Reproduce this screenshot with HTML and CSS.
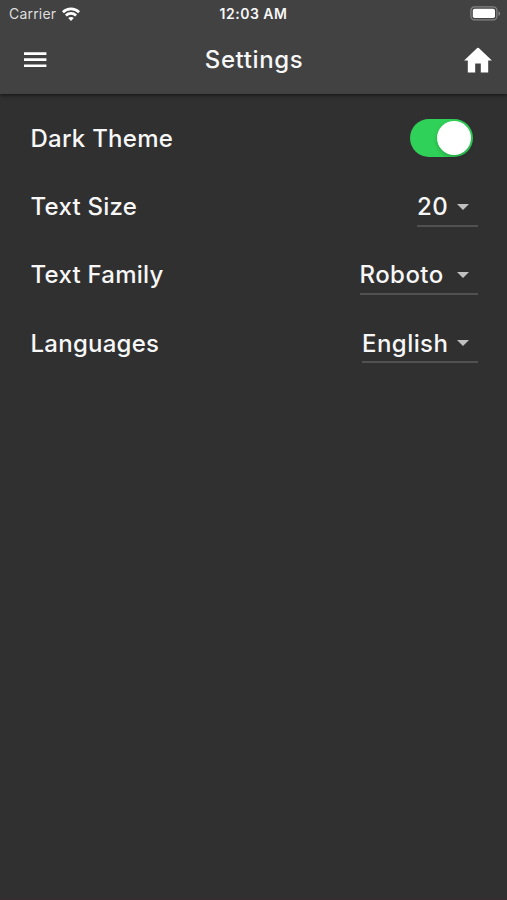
FILE: index.html
```html
<!DOCTYPE html>
<html lang="en">
<head>
<meta charset="utf-8">
<title>Settings</title>
<link rel="stylesheet" href="styles.css">
</head>
<body>
<header class="top">
  <div class="status">
    <div class="carrier"><span>Carrier</span>
      <svg class="wifi" width="18" height="14" viewBox="0 0 18 14" fill="none" stroke="#fff" stroke-width="2.7"><path d="M.9 5.2C5.3.8 12.7.8 17.1 5.2M3.9 8.5c2.9-2.8 7.3-2.8 10.2 0"/><path d="M9 14l-2.8-2.9c1.6-1.4 4-1.4 5.6 0z" fill="#fff" stroke="none"/></svg>
    </div>
    <span class="clock">12:03 AM</span>
    <svg class="battery" width="31" height="15" viewBox="0 0 31 15"><rect x=".9" y=".9" width="26" height="13" rx="3.6" fill="none" stroke="#858585" stroke-width="1.2"/><rect x="2.8" y="2.8" width="22.2" height="9.2" rx="1.8" fill="#fff"/><path d="M28.5 5.2c2.2.8 2.2 3.8 0 4.6z" fill="#858585"/></svg>
  </div>
  <div class="bar">
    <svg class="menu" width="24" height="18" viewBox="0 0 24 18" fill="#fff"><path d="M1 1.2h22.4v2.7H1zM1 7.3h22.4V10H1zM1 13.4h22.4v2.7H1z"/></svg>
    <h1 class="title">Settings</h1>
    <svg class="home" width="28" height="26" viewBox="0 0 28 26" fill="#fff"><path d="M11.2 25.5v-9h5.6v9h7.4v-12h3.7L14.8 1q-.8-.7-1.6 0L.1 13.5h3.7v12z"/></svg>
  </div>
</header>
<main class="list">
  <div class="row"><span class="label">Dark Theme</span><span class="switch"><span class="knob"></span></span></div>
  <div class="row"><span class="label">Text Size</span><span class="select s20"><span>20</span><i class="caret"></i></span></div>
  <div class="row"><span class="label">Text Family</span><span class="select sfont"><span>Roboto</span><i class="caret"></i></span></div>
  <div class="row"><span class="label">Languages</span><span class="select slang"><span>English</span><i class="caret"></i></span></div>
</main>
</body>
</html>
```
FILE: styles.css
```css
* { box-sizing: border-box; }
body {
  margin: 0;
  height: 900px;
  background: #303030;
  color: #f7f7f7;
  font-family: Inter, "Liberation Sans", sans-serif;
  overflow: hidden;
  display: flex;
  flex-direction: column;
}
.top {
  flex: none;
  height: 94px;
  background: #424242;
  box-shadow: 0 1px 4px rgba(0, 0, 0, .65);
}
.status {
  height: 27px;
  padding: 0 6px 0 9px;
  display: grid;
  grid-template-columns: 1fr auto 1fr;
  align-items: center;
}
.carrier {
  display: flex;
  align-items: center;
  gap: 6px;
  font-size: 14px;
  letter-spacing: .2px;
  color: #dedede;
}
.clock { margin-right: 3px; font-size: 14px; font-weight: 600; letter-spacing: .5px; }
.battery { justify-self: end; }
.bar {
  height: 66px;
  padding: 0 15px 0 23px;
  display: grid;
  grid-template-columns: 1fr auto 1fr;
  align-items: center;
}
.title { margin: 0; padding: 0 7px 2px 0; font-size: 24px; font-weight: 500; letter-spacing: .6px; }
.home { justify-self: end; margin-bottom: 1px; }
.list {
  flex: 1;
  padding: 10px 30px 0 30.5px;
  border-bottom: 1px solid #342a30;
}
.row {
  height: 68.4px;
  display: flex;
  align-items: center;
  justify-content: space-between;
}
.label, .select { font-size: 24px; font-weight: 500; letter-spacing: .25px; }
.switch {
  width: 63px;
  height: 38px;
  margin-right: 4px;
  padding: 2px;
  border-radius: 19px;
  background: #30d158;
  display: flex;
  justify-content: flex-end;
}
.knob {
  width: 34px;
  height: 34px;
  border-radius: 50%;
  background: #fff;
  box-shadow: 0 2px 4px rgba(0, 0, 0, .2);
}
.select {
  height: 40px;
  margin-right: -1px;
  padding: 2px 9px 0 0;
  letter-spacing: .45px;
  display: flex;
  align-items: center;
  justify-content: space-between;
  border-bottom: 2px solid #505050;
}
.s20 { width: 61px; }
.sfont { width: 118.5px; }
.slang { width: 116px; }
.caret {
  border: 6px solid transparent;
  border-top-color: #c1c1c1;
  border-bottom: 0;
}
```
